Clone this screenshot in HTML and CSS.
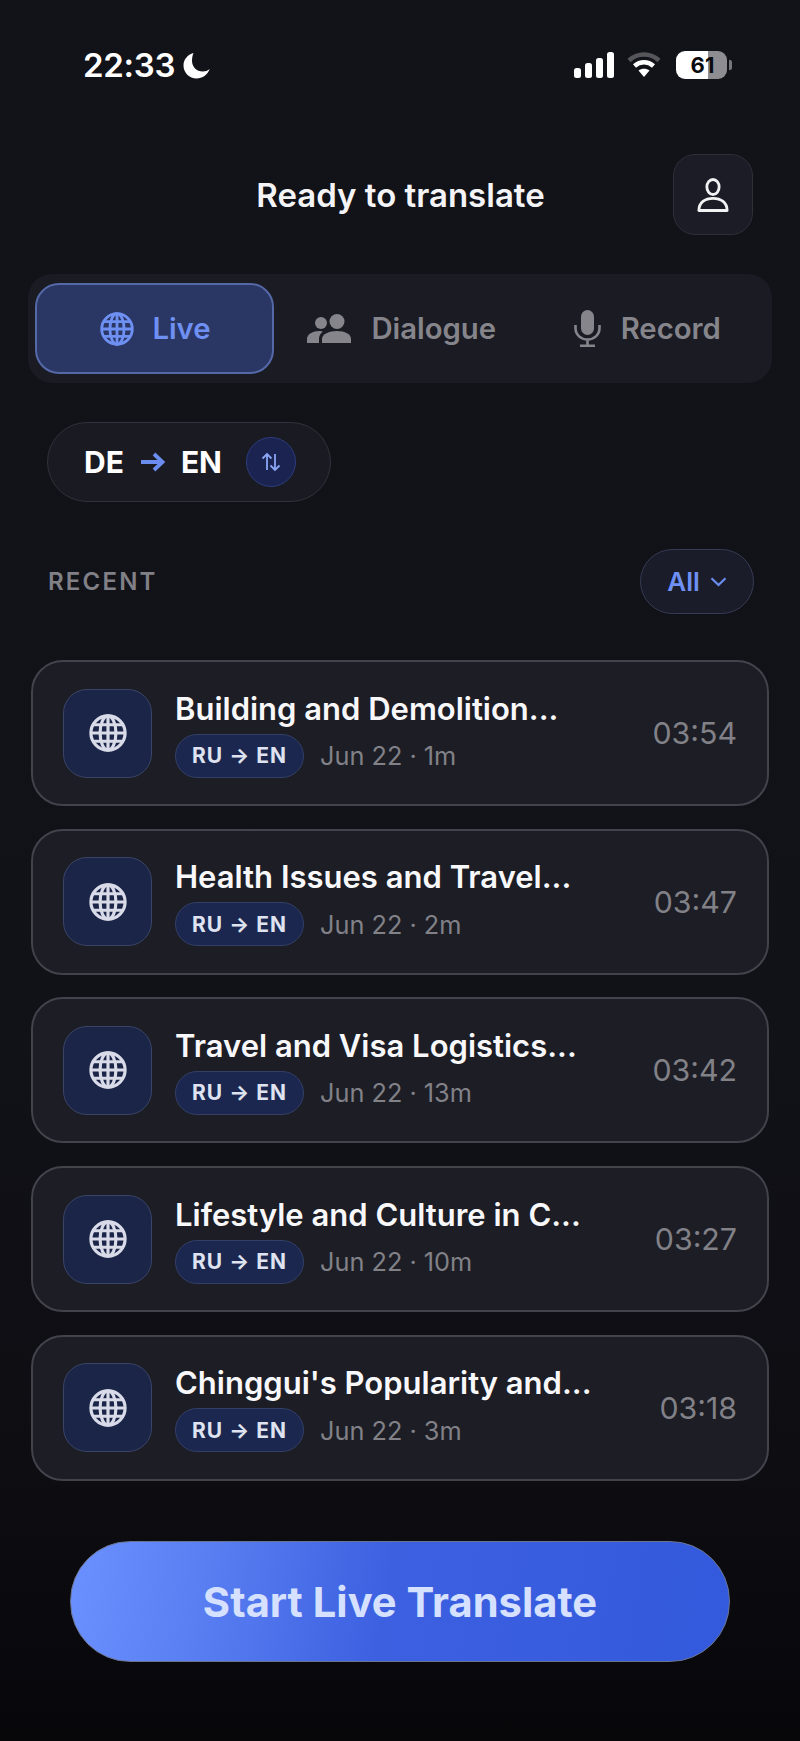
FILE: index.html
```html
<!DOCTYPE html>
<html>
  <head>
    <meta charset="UTF-8" />
    <title>Ready to translate</title>
    <link rel="stylesheet" href="styles.css">
  </head>
  <body>
    <svg width="0" height="0" class="defs">
      <defs>
        <g id="globe" fill="none" stroke="currentColor" stroke-width="2">
          <circle cx="12" cy="12" r="10.800" />
          <ellipse cx="12" cy="12" rx="5" ry="10.800" />
          <path d="M12 1.200v21.600M1.200 12h21.600M2.900 6.800h18.200M2.900 17.200h18.200" />
        </g>
      </defs>
    </svg>
    <div id="app">
      <div class="status">
        <div class="status_left">
          <span class="clock">22:33</span>
          <svg class="moon" viewBox="0 0 27 27"><path d="M10.500 1C4.600 2.600 .5 7.600 .5 13.500 .5 20.800 6.300 26.500 13.500 26.500 19.500 26.500 24.500 22.800 26.700 17 24.800 18.700 22.500 19.500 19.800 19.500 13.500 19.500 9 14.800 9 9 9 6 9.500 3.400 10.500 1z" fill="#fff" /></svg>
        </div>
        <div class="status_right">
          <svg class="signal" width="40" height="26" viewBox="0 0 40 26" fill="#fff">
            <rect x="0" y="16" width="7" height="10" rx="2.500" />
            <rect x="11" y="11" width="7" height="15" rx="2.500" />
            <rect x="22" y="6" width="7" height="20" rx="2.500" />
            <rect x="33" y="0" width="7" height="26" rx="2.500" />
          </svg>
          <svg class="wifi" width="34" height="26" viewBox="0 0 34 26" fill="none" stroke-width="4.500">
            <path d="M2 8.500C10.500 .5 23.500 .5 32 8.500" stroke="#55555a" />
            <path d="M7.500 14C13 9 21 9 26.500 14" stroke="#fff" />
            <path d="M17 25l-5.500-6.500c3-2.500 8-2.500 11 0z" fill="#fff" stroke="none" />
          </svg>
          <div class="battery">
            <div class="battery_body"><span>61</span></div>
            <div class="battery_cap"></div>
          </div>
        </div>
      </div>

      <div class="header">
        <div class="title">Ready to translate</div>
        <div class="profile">
          <svg width="32" height="34" viewBox="0 0 34 36" fill="none" stroke="#f2f2f4" stroke-width="3">
            <ellipse cx="17" cy="9.500" rx="6.500" ry="8" />
            <path d="M2 34.500C2 26 8.500 21.500 17 21.500S32 26 32 34.500z" stroke-linejoin="round" />
          </svg>
        </div>
      </div>

      <div class="tabs">
        <div class="tab active">
          <svg width="34" height="34" viewBox="0 0 24 24"><use href="#globe" /></svg>
          <span>Live</span>
        </div>
        <div class="tab">
          <svg width="44" height="29" viewBox="0 0 44 29" fill="currentColor">
            <circle cx="14" cy="9" r="6" />
            <circle cx="30" cy="7.500" r="7.500" />
            <path d="M0 29v-4c0-5 6-8 12-8 2 0 3 .3 4 .6-2.500 1.800-4 4.400-4 7.400v4z" />
            <path d="M15 29v-4c0-5 7-8 15-8s14 3 14 8v4z" />
          </svg>
          <span>Dialogue</span>
        </div>
        <div class="tab">
          <svg width="27" height="37" viewBox="0 0 27 37" fill="none" stroke="currentColor" stroke-width="2.600">
            <rect x="7" y="0" width="13" height="25" rx="6.500" fill="currentColor" stroke="none" />
            <path d="M1.500 15v3c0 7 5.500 11.500 12 11.500s12-4.500 12-11.500v-3M13.500 29.500v6M6 35.700h15" />
          </svg>
          <span>Record</span>
        </div>
      </div>

      <div class="lang_pill">
        <span>DE</span>
        <svg class="lang_arrow" width="24" height="20" viewBox="0 0 24 20" fill="none" stroke="#6b8df0" stroke-width="3.800">
          <path d="M0 10h21M13 2l8.500 8-8.500 8" />
        </svg>
        <span>EN</span>
        <div class="swap">
          <svg width="20" height="20" viewBox="0 0 20 20" fill="none" stroke="#8aa6f5" stroke-width="1.800">
            <path d="M6 18V2M1.500 6.500L6 2l4.500 4.500M14 2v16M9.500 13.500L14 18l4.500-4.500" />
          </svg>
        </div>
      </div>

      <div class="recent_row">
        <div class="recent_label">RECENT</div>
        <div class="filter">
          <span>All</span>
          <svg width="17" height="10" viewBox="0 0 17 10" fill="none" stroke="#6b8df0" stroke-width="2.200"><path d="M1.500 1.200L8.500 8l7-6.800" /></svg>
        </div>
      </div>

      <div class="list">
        <div class="card">
          <div class="card_icon"><svg width="38" height="38" viewBox="0 0 24 24"><use href="#globe" /></svg></div>
          <div class="card_body">
            <div class="card_title">Building and Demolition...</div>
            <div class="card_meta"><span class="route">RU → EN</span><span>Jun 22 · 1m</span></div>
          </div>
          <div class="duration">03:54</div>
        </div>
        <div class="card">
          <div class="card_icon"><svg width="38" height="38" viewBox="0 0 24 24"><use href="#globe" /></svg></div>
          <div class="card_body">
            <div class="card_title">Health Issues and Travel...</div>
            <div class="card_meta"><span class="route">RU → EN</span><span>Jun 22 · 2m</span></div>
          </div>
          <div class="duration">03:47</div>
        </div>
        <div class="card">
          <div class="card_icon"><svg width="38" height="38" viewBox="0 0 24 24"><use href="#globe" /></svg></div>
          <div class="card_body">
            <div class="card_title">Travel and Visa Logistics...</div>
            <div class="card_meta"><span class="route">RU → EN</span><span>Jun 22 · 13m</span></div>
          </div>
          <div class="duration">03:42</div>
        </div>
        <div class="card">
          <div class="card_icon"><svg width="38" height="38" viewBox="0 0 24 24"><use href="#globe" /></svg></div>
          <div class="card_body">
            <div class="card_title">Lifestyle and Culture in C...</div>
            <div class="card_meta"><span class="route">RU → EN</span><span>Jun 22 · 10m</span></div>
          </div>
          <div class="duration">03:27</div>
        </div>
        <div class="card">
          <div class="card_icon"><svg width="38" height="38" viewBox="0 0 24 24"><use href="#globe" /></svg></div>
          <div class="card_body">
            <div class="card_title">Chinggui's Popularity and...</div>
            <div class="card_meta"><span class="route">RU → EN</span><span>Jun 22 · 3m</span></div>
          </div>
          <div class="duration">03:18</div>
        </div>
      </div>

      <div class="start">Start Live Translate</div>
    </div>
  </body>
</html>
```

FILE: styles.css
```css
html, body {
    margin: 0;
    background: #09090c;
}
.defs { position: absolute; }
#app {
    display: flex;
    flex-direction: column;
    width: 800px;
    height: 1741px;
    box-sizing: border-box;
    overflow: hidden;
    padding-top: 45px;
    background: linear-gradient(#121219 0%, #111118 60%, #0d0d12 85%, #07070a 100%);
    font-family: Inter, "Liberation Sans", sans-serif;
    color: #fff;
}

/* status bar */
.status {
    display: flex;
    justify-content: space-between;
    align-items: center;
    height: 40px;
    padding: 0 68px 0 83px;
}
.status_left, .status_right {
    display: flex;
    align-items: center;
}
.clock {
    font-size: 33px;
    font-weight: 600;
    letter-spacing: -0.3px;
}
.moon {
    width: 27px;
    height: 27px;
    margin-left: 8px;
}
.wifi { margin-left: 13px; }
.battery {
    display: flex;
    align-items: center;
    margin-left: 15px;
}
.battery_body {
    display: flex;
    align-items: center;
    justify-content: center;
    width: 51px;
    height: 28px;
    padding-left: 2px;
    box-sizing: border-box;
    border-radius: 9px;
    background: linear-gradient(90deg, #fff 63%, #8e8e92 63%);
    color: #0b0b0e;
    font-size: 22px;
    font-weight: 700;
}
.battery_cap {
    width: 3px;
    height: 10px;
    margin-left: 2px;
    border-radius: 0 2px 2px 0;
    background: #77777b;
}

/* header */
.header {
    display: flex;
    justify-content: flex-end;
    align-items: center;
    position: relative;
    margin: 69px 47px 0 48px;
}
.title {
    position: absolute;
    left: 0;
    right: 0;
    padding-top: 1px;
    text-align: center;
    font-size: 33px;
    font-weight: 600;
    color: #f4f4f6;
}
.profile {
    display: flex;
    align-items: center;
    justify-content: center;
    width: 80px;
    height: 81px;
    box-sizing: border-box;
    border: 1.5px solid #2e2f39;
    border-radius: 22px;
    background: #1b1c25;
}

/* tabs */
.tabs {
    display: grid;
    grid-template-columns: 239px 1fr 1fr;
    column-gap: 8px;
    height: 109px;
    box-sizing: border-box;
    margin: 39px 28px 0;
    padding: 9px 7px;
    border-radius: 24px;
    background: #1a1b23;
}
.tab {
    display: flex;
    align-items: center;
    justify-content: center;
    gap: 20px;
    padding-left: 2px;
    border-radius: 24px;
    color: #85858b;
    font-size: 29.300px;
    font-weight: 600;
}
.tab.active {
    gap: 18px;
    border: 2px solid #5569a8;
    background: #2a3663;
    color: #6f90f3;
}

/* language pill */
.lang_pill {
    display: flex;
    align-items: center;
    align-self: flex-start;
    box-sizing: border-box;
    width: 284px;
    height: 80px;
    margin: 39px 0 0 47px;
    padding-left: 36px;
    border: 1.5px solid #30313a;
    border-radius: 40px;
    background: #1a1b22;
    font-size: 30px;
    font-weight: 700;
}
.lang_arrow { margin: 0 16px 0 17px; }
.swap {
    display: flex;
    align-items: center;
    justify-content: center;
    width: 50px;
    height: 50px;
    box-sizing: border-box;
    margin-left: 24px;
    border: 1.5px solid #2d3c7c;
    border-radius: 50%;
    background: #1b2450;
}

/* recent */
.recent_row {
    display: flex;
    justify-content: space-between;
    align-items: center;
    margin: 47px 46px 0 48px;
}
.recent_label {
    font-size: 24px;
    font-weight: 600;
    letter-spacing: 2.200px;
    color: #808086;
}
.filter {
    display: flex;
    align-items: center;
    justify-content: center;
    gap: 10px;
    width: 114px;
    height: 65px;
    box-sizing: border-box;
    border: 1.5px solid #353b52;
    border-radius: 33px;
    background: #1a1c29;
    color: #6f90f3;
    font-size: 26px;
    font-weight: 600;
}

/* list */
.list {
    display: flex;
    flex-direction: column;
    gap: 22.700px;
    margin: 46px 31px 0 31px;
}
.card {
    display: flex;
    align-items: center;
    height: 146px;
    box-sizing: border-box;
    padding: 0 30px;
    border: 2px solid #42434b;
    border-radius: 32px;
    background: #1c1d25;
}
.card_icon {
    display: flex;
    flex: none;
    align-items: center;
    justify-content: center;
    width: 89px;
    height: 89px;
    box-sizing: border-box;
    border: 1.5px solid #3a4466;
    border-radius: 24px;
    background: #1b2548;
    color: #d9dce8;
}
.card_body {
    flex: 1;
    margin-left: 23px;
}
.card_title {
    padding-top: 1px;
    font-size: 31px;
    font-weight: 600;
    line-height: 38px;
    color: #f8f8fa;
}
.card_meta {
    display: flex;
    align-items: center;
    gap: 16px;
    margin-top: 6px;
    font-size: 25.300px;
    color: #818187;
}
.route {
    display: flex;
    align-items: center;
    justify-content: center;
    width: 129px;
    height: 44px;
    box-sizing: border-box;
    border: 1.5px solid #343f66;
    border-radius: 22px;
    background: #1c2750;
    color: #dfe3f0;
    font-size: 21px;
    font-weight: 700;
    letter-spacing: 1px;
}
.duration {
    font-size: 30.300px;
    color: #818187;
}

/* start button */
.start {
    display: flex;
    align-items: center;
    justify-content: center;
    height: 121px;
    box-sizing: border-box;
    margin: 60px 70px 0;
    padding-top: 2px;
    border: 1.5px solid #6a7390;
    border-radius: 60px;
    background: linear-gradient(100deg, #6b90ff 0%, #5a7ff2 20%, #3c60e0 48%, #3359dc 100%);
    color: #d6e0ff;
    font-size: 41.700px;
    font-weight: 700;
}
```
